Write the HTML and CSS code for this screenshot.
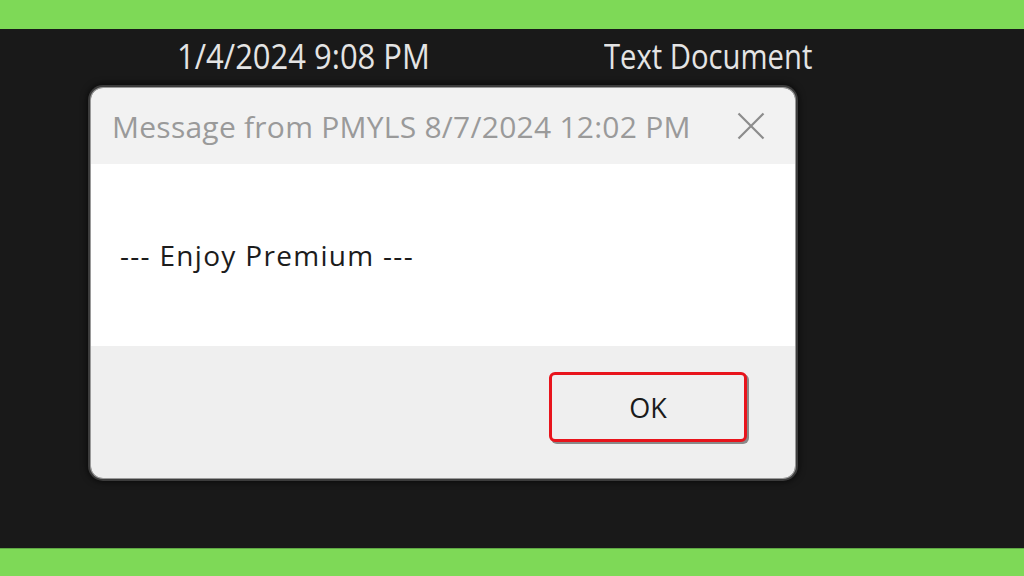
FILE: index.html
```html
<!DOCTYPE html>
<html>
<head>
<meta charset="utf-8">
<link rel="stylesheet" href="styles.css">
</head>
<body>
<div class="band"></div>
<main class="stage">
  <div class="header">
    <span class="col col-date">1/4/2024 9:08 PM</span>
    <span class="col col-type">Text Document</span>
  </div>
  <section class="dialog">
    <div class="titlebar">
      <span class="title">Message from PMYLS 8/7/2024 12:02 PM</span>
      <svg class="close" width="28" height="28" viewBox="0 0 28 28"><path d="M1.5 1.5 L26.5 26.5 M26.5 1.5 L1.5 26.5" stroke="#8c8c8c" stroke-width="2.2" fill="none"/></svg>
    </div>
    <div class="content">
      <p class="message">--- Enjoy Premium ---</p>
    </div>
    <div class="footer">
      <button class="ok">OK</button>
    </div>
  </section>
</main>
<div class="band band-bottom"></div>
</body>
</html>
```
FILE: styles.css
```css
html, body {
  margin: 0;
  padding: 0;
}
body {
  width: 1024px;
  height: 576px;
  display: flex;
  flex-direction: column;
  background: #191919;
  overflow: hidden;
  font-family: "Open Sans", "Noto Sans", sans-serif;
}
.band {
  height: 29px;
  background: #7ed957;
  flex: none;
}
.band-bottom {
  height: 28px;
  border-top: 1px solid #5fa845;
  box-sizing: border-box;
}
.stage {
  flex: 1;
  background: #191919;
  display: flex;
  flex-direction: column;
}
.header {
  height: 59px;
  box-sizing: border-box;
  padding-bottom: 7px;
  display: flex;
  align-items: center;
  color: #e4e4e4;
  font-size: 35px;
}
.col {
  display: inline-block;
  transform-origin: left center;
  white-space: nowrap;
  line-height: 1;
}
.col-date {
  margin-left: 177px;
  width: 427px;
  transform: scaleX(0.885);
}
.col-type {
  transform: scaleX(0.835);
}
.dialog {
  margin-left: 91px;
  width: 704px;
  height: 390px;
  border-radius: 12px;
  overflow: hidden;
  display: flex;
  flex-direction: column;
  box-shadow: 0 0 0 1px #9a9a9a, 0 0 0 3px #3c3c3c, 0 0 6px 4px rgba(0,0,0,0.6);
}
.titlebar {
  height: 76px;
  background: #f2f2f2;
  display: flex;
  align-items: center;
  justify-content: space-between;
  padding: 0 30px 0 21px;
}
.title {
  color: #9a9a9a;
  font-size: 30px;
  letter-spacing: 0.25px;
  white-space: nowrap;
}
.close {
  display: block;
}
.content {
  height: 182px;
  background: #ffffff;
  display: flex;
  align-items: center;
  padding-left: 29px;
}
.message {
  margin: 0;
  font-size: 28px;
  letter-spacing: 1.3px;
  color: #1c1c1c;
}
.footer {
  flex: 1;
  background: #efefef;
  display: flex;
  justify-content: flex-end;
  align-items: flex-start;
  padding: 26px 48px 0 0;
}
.ok {
  width: 198px;
  height: 70px;
  box-sizing: border-box;
  border: 3px solid #e8141c;
  border-radius: 6px;
  background: #efefef;
  box-shadow: 2px 2px 0 #8a8a8a;
  font-family: "Open Sans", "Noto Sans", sans-serif;
  font-size: 27px;
  color: #1a1a1a;
  padding: 0;
}
```
